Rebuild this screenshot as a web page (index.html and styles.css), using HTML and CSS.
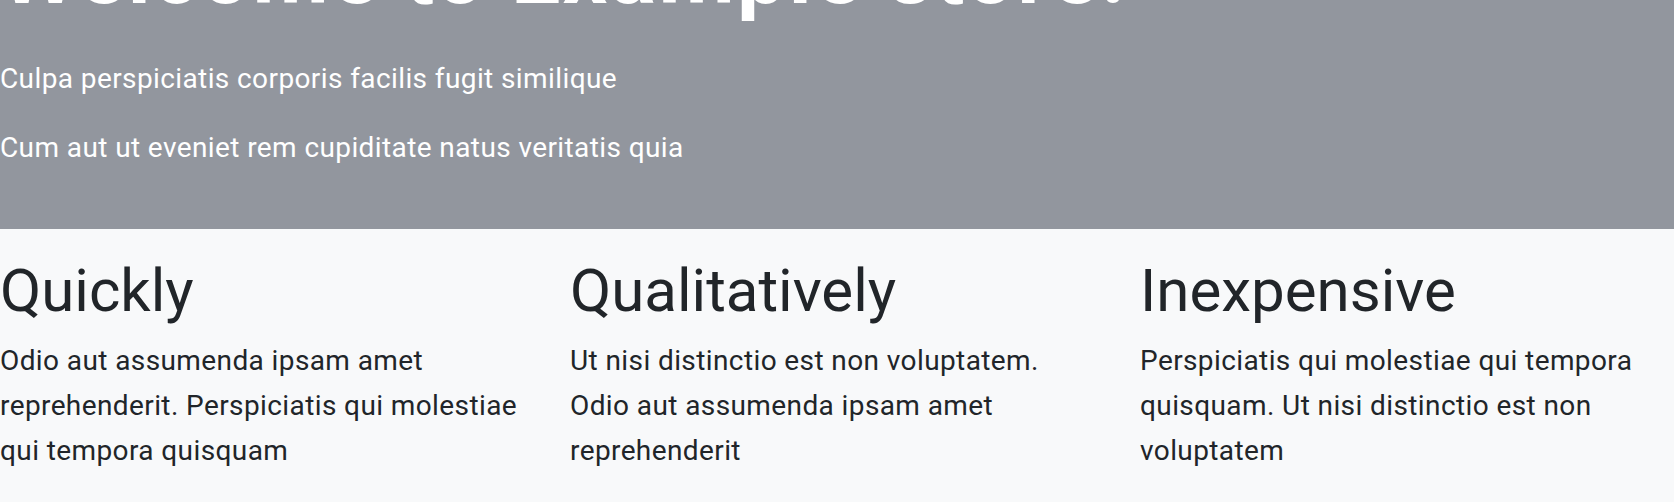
FILE: index.html
```html
<!DOCTYPE html>
<html lang="en">
<head>
<meta charset="utf-8">
<title>Example store</title>
<link rel="stylesheet" href="styles.css">
</head>
<body>
<section class="hero">
  <h1 class="hero-title">Welcome to Example store.</h1>
  <p class="hero-lead">Culpa perspiciatis corporis facilis fugit similique</p>
  <p class="hero-lead">Cum aut ut eveniet rem cupiditate natus veritatis quia</p>
</section>
<section class="features">
  <div class="feature">
    <h2 class="feature-title">Quickly</h2>
    <p class="feature-text">Odio aut assumenda ipsam amet reprehenderit. Perspiciatis qui molestiae qui tempora quisquam</p>
  </div>
  <div class="feature">
    <h2 class="feature-title">Qualitatively</h2>
    <p class="feature-text">Ut nisi distinctio est non voluptatem. Odio aut assumenda ipsam amet reprehenderit</p>
  </div>
  <div class="feature">
    <h2 class="feature-title">Inexpensive</h2>
    <p class="feature-text">Perspiciatis qui molestiae qui tempora quisquam. Ut nisi distinctio est non voluptatem</p>
  </div>
</section>
</body>
</html>
```
FILE: styles.css
```css
html, body {
  margin: 0;
  padding: 0;
}
body {
  font-family: "Roboto", "Liberation Sans", sans-serif;
  background: #f8f9fa;
  color: #212529;
  overflow: hidden;
}
.hero {
  background: #92969e;
  color: #ffffff;
  height: 229px;
  overflow: hidden;
}
.hero-title {
  margin: -71px 0 0 0;
  font-size: 88px;
  font-weight: 700;
  line-height: 88px;
  letter-spacing: 2.1px;
}
.hero-lead {
  margin: 42px 0 0 0;
  font-size: 28px;
  line-height: 40px;
  letter-spacing: 0.4px;
}
.hero-lead + .hero-lead {
  margin-top: 29px;
}
.features {
  display: grid;
  grid-template-columns: 528px 528px 1fr;
  column-gap: 42px;
}
.feature-title {
  margin: 26px 0 0 0;
  font-size: 60px;
  font-weight: 400;
  line-height: 72px;
}
.feature-text {
  margin: 11px 0 0 0;
  font-size: 28px;
  line-height: 45px;
  letter-spacing: 0.4px;
}
```
